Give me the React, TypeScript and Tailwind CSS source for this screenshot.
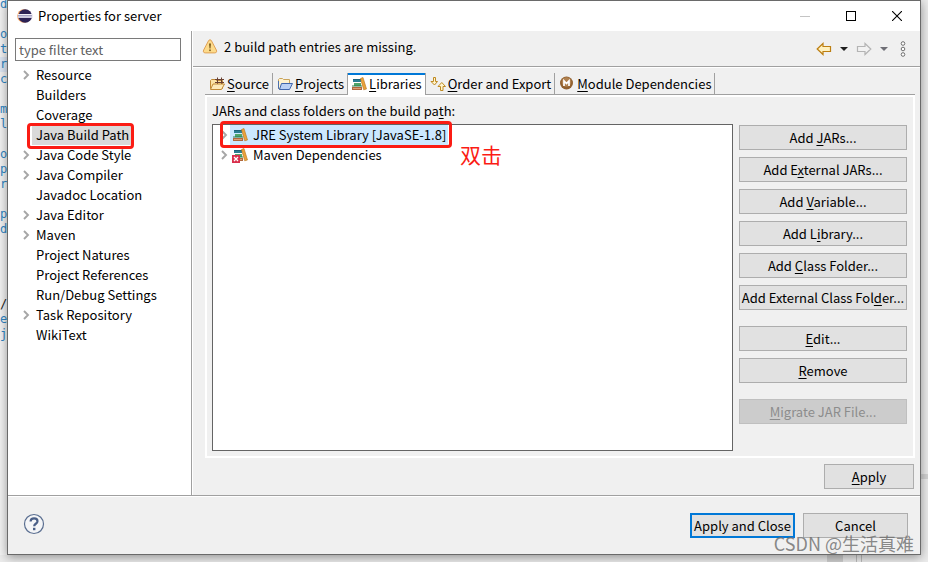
import React from 'react';

interface TreeItem {
  label: string;
  expandable?: boolean;
  selected?: boolean;
}

const TREE_ITEMS: TreeItem[] = [
  { label: 'Resource', expandable: true },
  { label: 'Builders' },
  { label: 'Coverage' },
  { label: 'Java Build Path', selected: true },
  { label: 'Java Code Style', expandable: true },
  { label: 'Java Compiler', expandable: true },
  { label: 'Javadoc Location' },
  { label: 'Java Editor', expandable: true },
  { label: 'Maven', expandable: true },
  { label: 'Project Natures' },
  { label: 'Project References' },
  { label: 'Run/Debug Settings' },
  { label: 'Task Repository', expandable: true },
  { label: 'WikiText' },
];

// "&" marks the mnemonic letter, like in SWT labels
const BUTTON_GROUPS: string[][] = [
  [
    'Add &JARs...',
    'Add E&xternal JARs...',
    'Add &Variable...',
    'Add L&ibrary...',
    'Add &Class Folder...',
    'Add External Class Fol&der...',
  ],
  ['&Edit...', '&Remove'],
  ['&Migrate JAR File...'],
];

// Visible first column of the editor behind the dialog
const CODE_COLUMN = [
  'd', '', 'o', 't', 'r', 'c', '', 'm', 'l', '', 'o', 'p', 'r', '', 'p', 'd',
  '', '', '', '', '/', 'e', 'j',
];

const Mnemonic: React.FC<{ text: string }> = ({ text }) => {
  const i = text.indexOf('&');
  if (i < 0) return <>{text}</>;
  return (
    <span className="whitespace-nowrap">
      {text.slice(0, i)}
      <span className="underline underline-offset-2">{text[i + 1]}</span>
      {text.slice(i + 2)}
    </span>
  );
};

const EclipseIcon = () => (
  <svg width="16" height="16" viewBox="0 0 16 16" className="shrink-0">
    <circle cx="7" cy="8" r="6.800" fill="#f0a060" />
    <circle cx="8.200" cy="8" r="6.800" fill="#2c2255" />
    <path d="M1 6h14.200v4H1z" fill="#a5a2c4" />
    <path d="M.8 6.500h14.600M.8 9h14.600" stroke="#f1f0f7" strokeWidth="1.200" />
  </svg>
);

const Chevron = () => (
  <svg width="8" height="10" viewBox="0 0 8 10" fill="none" className="shrink-0">
    <path d="M2 1l4 4-4 4" stroke="#a6a6a6" strokeWidth="1.900" />
  </svg>
);

const WarningIcon = () => (
  <svg width="16" height="16" viewBox="0 0 16 16" className="shrink-0">
    <path
      d="M8 .8c.8 0 1.200.5 1.600 1.200l4.700 9c.8 1.600.2 2.900-1.500 2.900H3.200c-1.700 0-2.300-1.300-1.500-2.900l4.700-9C6.800 1.300 7.200.8 8 .8z"
      fill="#fddb8b"
      stroke="#dfa055"
    />
    <path d="M7 4.500h2L8.500 9.500h-1z" fill="#7a5a1c" />
    <rect x="7.200" y="10.500" width="1.600" height="1.600" fill="#7a5a1c" />
  </svg>
);

const BooksIcon: React.FC<{ missing?: boolean }> = ({ missing }) => (
  <svg width="16" height="16" viewBox="0 0 16 16" className="shrink-0">
    <path d="M2 3h8v3H2z" fill="#2a7f93" />
    <path d="M2 3h8v1H2z" fill="#1f6379" />
    <path d="M3 7h7v3H3z" fill="#4fa66b" />
    <path d="M1 9.500h10v1H1z" fill="#2f7d4b" />
    <path d="M1 11h10v3H1z" fill="#b0683c" />
    <path d="M2 12h8v1H2z" fill="#d9a077" />
    <path d="M9.500 2.500l2.500-1 3.500 11.500-2.800.8z" fill="#e9a23b" stroke="#b97417" strokeWidth=".6" />
    {missing && (
      <>
        <rect x="0" y="8" width="8" height="8" fill="#d9304c" />
        <path d="M2 10l4 4M6 10l-4 4" stroke="#fff" strokeWidth="1.300" />
      </>
    )}
  </svg>
);

const SourceIcon = () => (
  <svg width="16" height="16" viewBox="0 0 16 16" className="shrink-0">
    <path d="M1.500 12.500v-8l1-1h4l1 1h6v8z" fill="#fbe3a5" stroke="#c08a35" />
    <path d="M6 3.500h9M6 6.500h9M8.500 1.500v7M12.500 1.500v7" stroke="#6a4030" />
    <path d="M1.500 13.500l2.500-5.500h11.500l-3 5.500z" fill="#fdeab9" stroke="#c08a35" />
  </svg>
);

const ProjectsIcon = () => (
  <svg width="16" height="16" viewBox="0 0 16 16" className="shrink-0">
    <path d="M1.500 12.500v-9l1-1h3l1 1h6v8z" fill="#fdf2d0" stroke="#c9a35a" />
    <path d="M1.500 5v7.500l1 1" fill="none" stroke="#4a6fae" />
    <path d="M2.500 13.500l2-6h11l-3 6z" fill="#b9d0f5" stroke="#3f66ad" />
  </svg>
);

const OrderIcon = () => (
  <svg width="16" height="16" viewBox="0 0 16 16" className="shrink-0">
    <path d="M3.500 1.500h2v4h2L4.500 9 1 5.500h2.500z" fill="#fff4cd" stroke="#bf8a22" />
    <path d="M10.500 14.500h2.500v-4h2.500L11.800 6.500 8 10.500h2.500z" fill="#fff4cd" stroke="#bf8a22" />
  </svg>
);

const ModuleIcon = () => (
  <svg width="16" height="16" viewBox="0 0 16 16" className="shrink-0">
    <circle cx="7.500" cy="7" r="6.500" fill="#91602f" />
    <circle cx="7.500" cy="6" r="4.800" fill="#b08150" />
    <path d="M5 10V4.800l2.500 2.700L10 4.800V10" fill="none" stroke="#fff" strokeWidth="1.700" />
  </svg>
);

const ArrowIcon: React.FC<{ forward?: boolean }> = ({ forward }) => (
  <svg width="16" height="14" viewBox="0 0 16 14" className={forward ? 'rotate-180' : ''}>
    <path
      d="M1.200 7L7 1.500v3h7.500v5H7v3z"
      fill={forward ? '#f2f2f2' : '#fff1bf'}
      stroke={forward ? '#b4b4b4' : '#bd7f12'}
      strokeWidth="1.200"
    />
  </svg>
);

const Caret: React.FC<{ color: string }> = ({ color }) => (
  <svg width="8" height="4" viewBox="0 0 8 4">
    <path d="M0 0h8L4 4z" fill={color} />
  </svg>
);

const MenuDots = () => (
  <svg width="6" height="16" viewBox="0 0 6 16" fill="#fff" stroke="#6f6f6f">
    <circle cx="3" cy="2.500" r="1.800" />
    <circle cx="3" cy="8" r="1.800" />
    <circle cx="3" cy="13.500" r="1.800" />
  </svg>
);

const HelpIcon = () => (
  <svg width="22" height="22" viewBox="0 0 22 22" fill="none">
    <circle cx="11" cy="11" r="9.500" fill="#f4f5f7" stroke="#5a6e90" strokeWidth="1.200" />
    <path
      d="M7.600 8.500c0-2 1.500-3.200 3.500-3.200s3.400 1.100 3.400 2.900c0 2.600-3.300 2.500-3.300 5"
      stroke="#4a5f87"
      strokeWidth="2.200"
    />
    <rect x="10" y="14.800" width="2.400" height="2.400" fill="#4a5f87" />
  </svg>
);

const TABS = [
  { label: '&Source', icon: <SourceIcon /> },
  { label: '&Projects', icon: <ProjectsIcon /> },
  { label: '&Libraries', icon: <BooksIcon />, active: true },
  { label: '&Order and Export', icon: <OrderIcon /> },
  { label: '&Module Dependencies', icon: <ModuleIcon /> },
];

const buttonClass = 'flex h-[25px] items-center justify-center bg-[#e1e1e1]';

const TitleBar = () => (
  <header className="flex h-[30px] items-center bg-white pl-[9px]">
    <EclipseIcon />
    <h1 className="ml-[5px] flex-1">Properties for server</h1>
    <button aria-label="Minimize" className="flex h-full w-[46px] items-center justify-center">
      <svg width="10" height="10" stroke="#c4c4c4">
        <path d="M0 5.500h10" />
      </svg>
    </button>
    <button aria-label="Maximize" className="flex h-full w-[46px] items-center justify-center">
      <svg width="10" height="10" fill="none" stroke="#000">
        <rect x=".5" y=".5" width="9" height="9" />
      </svg>
    </button>
    <button aria-label="Close" className="flex h-full w-[46px] items-center justify-center">
      <svg width="10" height="10" stroke="#000" strokeWidth="1.100">
        <path d="M0 0l10 10M10 0L0 10" />
      </svg>
    </button>
  </header>
);

const Sidebar = () => (
  <nav className="w-[184px] shrink-0 border-r border-[#a0a0a0] bg-white pt-[7px]">
    <input
      type="text"
      aria-label="Filter"
      placeholder="type filter text"
      className="ml-[7px] block h-[23px] w-[166px] border border-[#7a7a7a] bg-white px-[3px] outline-none placeholder:text-[#606060]"
    />
    <ul className="mt-1">
      {TREE_ITEMS.map((item) => (
        <li key={item.label} className="flex h-5 items-center pl-[14px]">
          <span className="flex w-[10px]">{item.expandable && <Chevron />}</span>
          <button
            className={`relative h-5 px-1 leading-5 ${item.selected ? 'bg-[#d9d9d9]' : ''}`}
          >
            {item.label}
            {item.selected && (
              <span className="absolute -right-px -left-[5px] -top-[2px] -bottom-1 rounded border-3 border-[#fb1c14]" />
            )}
          </button>
        </li>
      ))}
    </ul>
  </nav>
);

const LibraryList = () => (
  <ul className="flex-1 border border-[#646464] bg-white">
    <li className="flex h-5 items-center pl-[7px]">
      <Chevron />
      <button className="relative ml-[2px] flex h-5 items-center gap-[5px] bg-[#cce8ff] px-[2px]">
        <BooksIcon />
        <span className="leading-5">JRE System Library [JavaSE-1.8]</span>
        <span className="absolute -right-[4px] -left-[10px] -top-1 -bottom-[3px] rounded border-3 border-[#fb1c14]" />
        <span className="absolute left-[230px] top-[14px] whitespace-nowrap text-[21px] leading-[30px] text-[#fb1c14]">
          双击
        </span>
      </button>
    </li>
    <li className="flex h-5 items-center pl-[7px]">
      <Chevron />
      <button className="ml-[2px] flex h-5 items-center gap-[5px] px-[2px]">
        <BooksIcon missing />
        <span className="leading-5">Maven Dependencies</span>
      </button>
    </li>
  </ul>
);

const LibrariesPanel = () => (
  <div className="flex flex-1 flex-col border-2 border-white pb-[5px] pl-[5px] pr-[6px]">
    <p className="h-[27px] leading-[27px]">
      <Mnemonic text="JARs and class folders on the build pa&th:" />
    </p>
    <div className="flex flex-1 gap-[6px]">
      <LibraryList />
      <div className="flex w-[168px] flex-col gap-4 pt-px">
        {BUTTON_GROUPS.map((group, i) => (
          <div key={i} className="flex flex-col gap-[7px]">
            {group.map((label) => (
              <button
                key={label}
                disabled={i === 2}
                className={`${buttonClass} border border-[#adadad] disabled:border-[#bfbfbf] disabled:bg-[#cccccc] disabled:text-[#8c8c8c]`}
              >
                <Mnemonic text={label} />
              </button>
            ))}
          </div>
        ))}
      </div>
    </div>
  </div>
);

const BuildPathPage = () => (
  <main className="flex flex-1 flex-col border-l border-white">
    <div className="flex h-9 items-center border-b border-[#a0a0a0] pl-[9px] pr-[14px]">
      <div className="flex flex-1 items-center gap-[6px] pb-1">
        <WarningIcon />
        <p>2 build path entries are missing.</p>
      </div>
      <div className="flex items-center">
        <button aria-label="Back"><ArrowIcon /></button>
        <button aria-label="Back history" className="ml-2"><Caret color="#1e1e1e" /></button>
        <button aria-label="Forward" className="ml-2"><ArrowIcon forward /></button>
        <button aria-label="Forward history" className="ml-2"><Caret color="#6f6f76" /></button>
        <button aria-label="View menu" className="ml-3"><MenuDots /></button>
      </div>
    </div>
    <div className="flex flex-1 flex-col border-t border-white pt-[5px] pl-3 pr-[5px]">
      <div role="tablist" className="flex h-[22px] border-b border-[#a0a0a0]">
        {TABS.map((tab) => (
          <button
            key={tab.label}
            role="tab"
            aria-selected={!!tab.active}
            className={
              tab.active
                ? '-mb-px -ml-px flex items-center gap-[2px] border-x border-[#a0a0a0] bg-white px-[3px] pb-px shadow-[inset_0_2px_#0078d7]'
                : 'flex items-center gap-[2px] border-r border-[#a0a0a0] pl-1 pr-[3px]'
            }
          >
            {tab.icon}
            <Mnemonic text={tab.label} />
          </button>
        ))}
      </div>
      <LibrariesPanel />
      <div className="flex justify-end py-[6px] pr-px">
        <button className={`${buttonClass} w-[90px] border border-[#adadad]`}>
          <Mnemonic text="&Apply" />
        </button>
      </div>
    </div>
  </main>
);

const Footer = () => (
  <footer className="border-t border-[#a0a0a0]">
    <div className="flex items-start border-t border-white py-4 pl-[15px] pr-3">
      <button aria-label="Help"><HelpIcon /></button>
      <div className="relative ml-auto flex gap-2">
        <button className={`${buttonClass} w-[105px] border-2 border-[#0078d7]`}>
          Apply and Close
        </button>
        <button className={`${buttonClass} w-[105px] border border-[#adadad]`}>Cancel</button>
        <span className="pointer-events-none absolute -right-[6px] top-[18px] whitespace-nowrap text-[18px] leading-6 text-[#6b6b6b]/80">
          CSDN @生活真难
        </span>
      </div>
    </div>
  </footer>
);

export default function App() {
  return (
    <div className='flex min-h-screen flex-col bg-[#ececec] font-["Noto_Sans_CJK_SC",sans-serif] text-[13px] leading-5 text-black'>
      <div className="flex flex-1">
        <div className='w-[7px] shrink-0 overflow-hidden bg-[#f4f4f4] font-["DejaVu_Sans_Mono",monospace] text-[12px] leading-[15px] text-[#2f86c4]'>
          {CODE_COLUMN.map((char, i) => (
            <div
              key={i}
              className={`flex items-end ${i === 0 ? 'h-3' : 'h-[15px]'} ${i === 4 ? 'bg-[#dfe8f5]' : ''} ${char === '/' ? 'text-[#222222]' : ''}`}
            >
              {char}
            </div>
          ))}
        </div>
        <div className="relative flex flex-1 flex-col border border-[#6a6a6a] bg-[#f0f0f0] shadow-[0_2px_10px_rgba(0,0,0,0.4)]">
          <TitleBar />
          <div className="flex flex-1">
            <Sidebar />
            <BuildPathPage />
          </div>
          <Footer />
        </div>
        <div className="flex w-[7px] shrink-0 flex-col justify-end pb-[76px]">
          <div className="h-[5px] bg-[#d4d4d4]" />
        </div>
      </div>
      <div className="flex h-[7px] justify-end pr-[66px]">
        <div className="mr-[13px] w-4 bg-[#cfcfcf]" />
        <div className="w-[6px] border-x border-[#bdbdbd]" />
      </div>
    </div>
  );
}
